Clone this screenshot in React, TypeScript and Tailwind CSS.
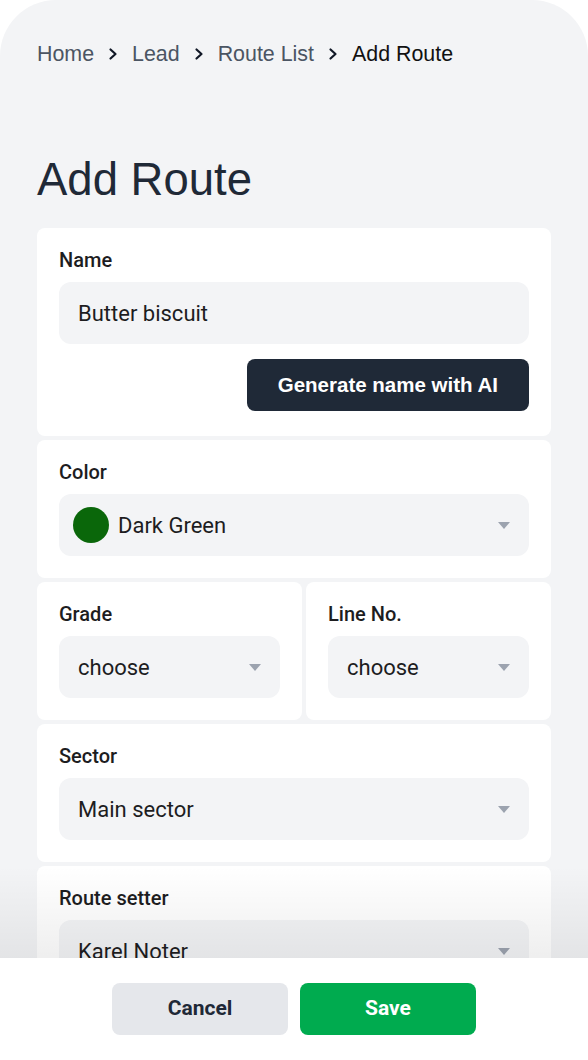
import React from "react";

const crumbs = ["Home", "Lead", "Route List"];

function Chevron() {
  return (
    <svg width="12" height="14" viewBox="0 0 12 14" fill="none" className="shrink-0">
      <polyline points="3.5,2.5 8.5,7 3.5,11.5" stroke="#111827" strokeWidth="2.2" strokeLinecap="round" strokeLinejoin="round" />
    </svg>
  );
}

function Caret() {
  return (
    <svg width="12" height="7" viewBox="0 0 12 7" className="shrink-0">
      <polygon points="0,0 12,0 6,7" fill="#9ca3af" />
    </svg>
  );
}

interface SelectBoxProps {
  value: string;
  swatch?: string;
}

function SelectBox({ value, swatch }: SelectBoxProps) {
  return (
    <div
      className={`flex h-[62px] items-center justify-between rounded-xl bg-[#f3f4f6] pr-[19px] ${
        swatch ? "pl-[14px]" : "pl-[19px]"
      }`}
    >
      <div className="flex items-center gap-[9px]">
        {swatch && <span className="h-9 w-9 rounded-full" style={{ backgroundColor: swatch }} />}
        <span className="text-[22px] text-[#1d1d1f]">{value}</span>
      </div>
      <Caret />
    </div>
  );
}

function Card({ label, children }: { label: string; children: React.ReactNode }) {
  return (
    <div className="rounded-lg bg-white px-[22px] pb-[22px] pt-5">
      <div className="mb-[10px] text-[20px] font-medium leading-6 text-[#1d1d1f]">{label}</div>
      {children}
    </div>
  );
}

export default function App() {
  return (
    <div className="bg-white" style={{ fontFamily: "Roboto, 'Liberation Sans', sans-serif" }}>
      <div className="relative h-[1060px] overflow-hidden rounded-t-[56px] bg-[#f3f4f6] px-[37px] pt-[41px]">
        {/* breadcrumb */}
        <nav
          className="flex items-center gap-[13px] text-[21.4px] leading-[26px]"
          style={{ fontFamily: "'Liberation Sans', Arial, sans-serif" }}
        >
          {crumbs.map((c) => (
            <React.Fragment key={c}>
              <span className="text-[#4b5563]">{c}</span>
              <Chevron />
            </React.Fragment>
          ))}
          <span className="text-[#111111]">Add Route</span>
        </nav>

        <h1
          className="mt-[90px] text-[45.5px] leading-[45px] text-[#1f2937]"
          style={{ fontFamily: "'Liberation Sans', Arial, sans-serif" }}
        >
          Add Route
        </h1>

        <div className="mt-[26px] flex flex-col gap-1">
          <div className="rounded-lg bg-white px-[22px] pb-[25px] pt-5">
            <div className="mb-[10px] text-[20px] font-medium leading-6 text-[#1d1d1f]">Name</div>
            <div className="flex h-[62px] items-center rounded-xl bg-[#f3f4f6] px-[19px]">
              <span className="text-[22px] text-[#1d1d1f]">Butter biscuit</span>
            </div>
            <div className="mt-[15px] flex justify-end">
              <button
                className="h-[52px] rounded-lg bg-[#1f2937] px-[31px] text-[20.5px] font-bold text-white"
                style={{ fontFamily: "'Liberation Sans', Arial, sans-serif" }}
              >
                Generate name with AI
              </button>
            </div>
          </div>

          <Card label="Color">
            <SelectBox value="Dark Green" swatch="#0a670a" />
          </Card>

          <div className="grid grid-cols-[265px_1fr] gap-1">
            <Card label="Grade">
              <SelectBox value="choose" />
            </Card>
            <Card label="Line No.">
              <SelectBox value="choose" />
            </Card>
          </div>

          <Card label="Sector">
            <SelectBox value="Main sector" />
          </Card>

          <Card label="Route setter">
            <SelectBox value="Karel Noter" />
          </Card>
        </div>

        {/* fade above footer */}
        <div className="pointer-events-none absolute bottom-[102px] left-0 right-0 h-[92px] bg-gradient-to-t from-black/[0.065] to-transparent" />

        {/* footer actions */}
        <div className="absolute bottom-0 left-0 right-0 flex h-[102px] justify-center gap-3 bg-white pt-[25px]">
          <button className="h-[52px] w-[176px] rounded-lg bg-[#e5e7eb] text-[21px] font-bold text-[#1f2937]">
            Cancel
          </button>
          <button className="h-[52px] w-[176px] rounded-lg bg-[#00ab4f] text-[21px] font-bold text-white">
            Save
          </button>
        </div>
      </div>
    </div>
  );
}
